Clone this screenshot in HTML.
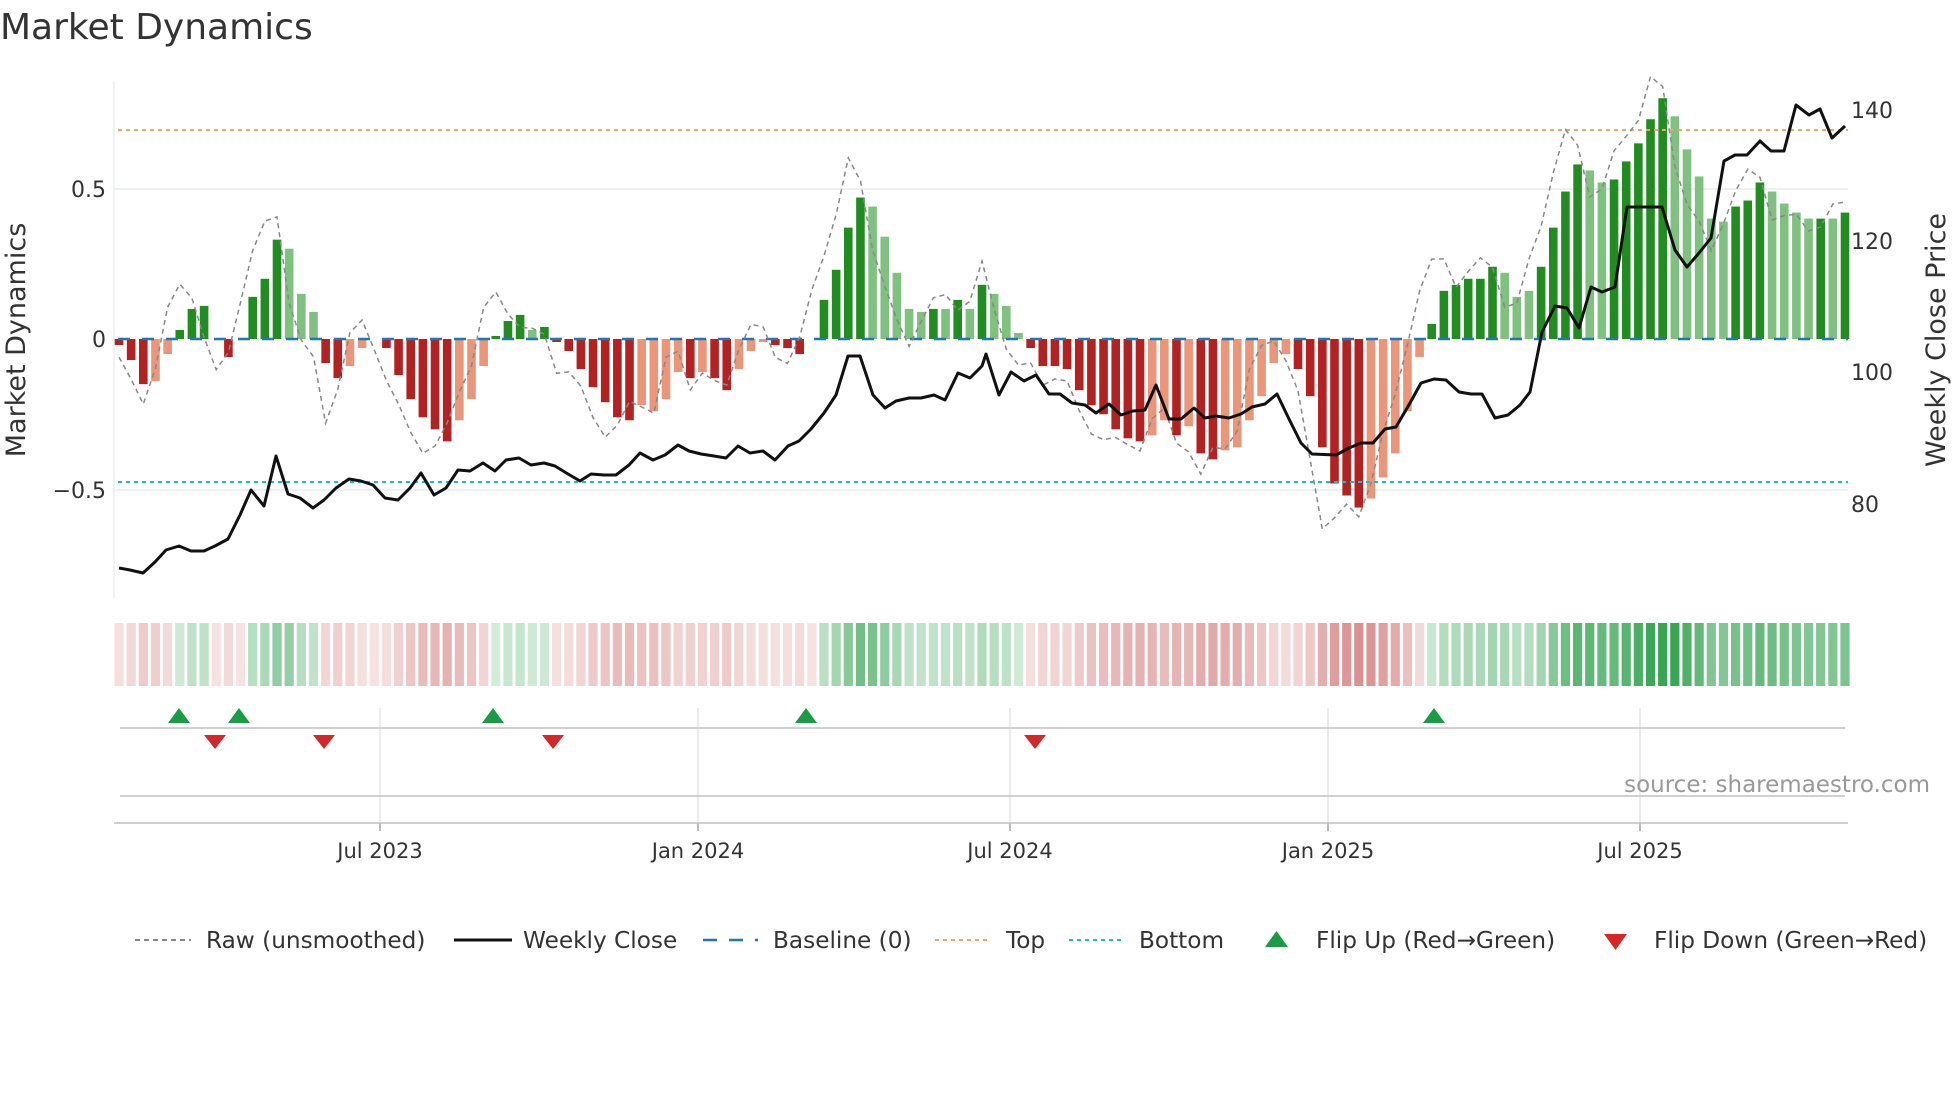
<!DOCTYPE html>
<html><head><meta charset="utf-8">
<style>
html,body{margin:0;padding:0;background:#fff;width:1960px;height:1102px;overflow:hidden}
svg{display:block;font-family:"DejaVu Sans","Liberation Sans",sans-serif}
</style></head>
<body>
<svg id="s" width="1960" height="1102" viewBox="0 0 1960 1102" xmlns="http://www.w3.org/2000/svg">
<text x="0" y="39" font-size="36" fill="#333">Market Dynamics</text>
<line x1="115" y1="189" x2="1848" y2="189" stroke="#e9ecf1" stroke-width="1.5"/>
<line x1="115" y1="490" x2="1848" y2="490" stroke="#e9ecf1" stroke-width="1.5"/>
<line x1="114" y1="81" x2="114" y2="598" stroke="#eceff3" stroke-width="1.5"/>
<g id="bars"></g>
<g id="strip"></g>
<line x1="118" y1="339" x2="1848" y2="339" stroke="#1f77b4" stroke-width="2.5" stroke-dasharray="12,12"/>
<line x1="118" y1="130" x2="1848" y2="130" stroke="#f4a460" stroke-width="2" stroke-dasharray="4,4"/>
<line x1="118" y1="482" x2="1848" y2="482" stroke="#17becf" stroke-width="2" stroke-dasharray="4,4"/>
<polyline id="raw" fill="none" stroke="#888" stroke-width="1.5" stroke-dasharray="5,4"/>
<polyline id="price" fill="none" stroke="#111" stroke-width="3" stroke-linejoin="round"/>
<g font-size="22" fill="#333" text-anchor="end">
<text x="106" y="197">0.5</text><text x="106" y="347">0</text><text x="106" y="498">−0.5</text>
</g>
<g font-size="22" fill="#333">
<text x="1851" y="118">140</text><text x="1851" y="249">120</text><text x="1851" y="380">100</text><text x="1851" y="512">80</text>
</g>
<text transform="translate(25,340) rotate(-90)" font-size="27" fill="#333" text-anchor="middle">Market Dynamics</text>
<text transform="translate(1945,340) rotate(-90)" font-size="27" fill="#333" text-anchor="middle">Weekly Close Price</text>
<g stroke="#e6e6e6" stroke-width="1.5">
<line x1="380" y1="708" x2="380" y2="823"/><line x1="698" y1="708" x2="698" y2="823"/><line x1="1010" y1="708" x2="1010" y2="823"/><line x1="1328" y1="708" x2="1328" y2="823"/><line x1="1640" y1="708" x2="1640" y2="823"/>
</g>
<line x1="120" y1="728" x2="1845" y2="728" stroke="#d0d0d0" stroke-width="2"/>
<line x1="120" y1="796" x2="1845" y2="796" stroke="#d0d0d0" stroke-width="2"/>
<line x1="114" y1="823" x2="1848" y2="823" stroke="#d0d0d0" stroke-width="2"/>
<g stroke="#bbb" stroke-width="2">
<line x1="380" y1="823" x2="380" y2="831"/><line x1="698" y1="823" x2="698" y2="831"/><line x1="1010" y1="823" x2="1010" y2="831"/><line x1="1328" y1="823" x2="1328" y2="831"/><line x1="1640" y1="823" x2="1640" y2="831"/>
</g>
<g font-size="21" fill="#333" text-anchor="middle">
<text x="380" y="858">Jul 2023</text><text x="698" y="858">Jan 2024</text><text x="1010" y="858">Jul 2024</text><text x="1328" y="858">Jan 2025</text><text x="1640" y="858">Jul 2025</text>
</g>
<g id="flips"></g>
<text x="1930" y="792" font-size="23" fill="#999" text-anchor="end">source: sharemaestro.com</text>
<g font-size="23.2" fill="#333">
<line x1="135" y1="940" x2="191" y2="940" stroke="#888" stroke-width="2" stroke-dasharray="5,4"/>
<text x="206" y="948">Raw (unsmoothed)</text>
<line x1="454" y1="940" x2="512" y2="940" stroke="#111" stroke-width="3"/>
<text x="523" y="948">Weekly Close</text>
<line x1="703" y1="940" x2="758" y2="940" stroke="#1f77b4" stroke-width="2.5" stroke-dasharray="14,12"/>
<text x="773" y="948">Baseline (0)</text>
<line x1="935" y1="940" x2="990" y2="940" stroke="#f4a460" stroke-width="2" stroke-dasharray="4,4"/>
<text x="1006" y="948">Top</text>
<line x1="1069" y1="940" x2="1125" y2="940" stroke="#17becf" stroke-width="2" stroke-dasharray="4,4"/>
<text x="1139" y="948">Bottom</text>
<polygon points="1265,947 1288,947 1276.5,931" fill="#1a9b45"/>
<text x="1316" y="948">Flip Up (Red→Green)</text>
<polygon points="1604,934 1627,934 1615.5,950" fill="#d62728"/>
<text x="1654" y="948">Flip Down (Green→Red)</text>
</g>
</svg>
<script>
var V="-0.02d,-0.07d,-0.15d,-0.14l,-0.05l,0.03d,0.1d,0.11d,0d,-0.06d,0d,0.14d,0.2d,0.33d,0.3l,0.15l,0.09l,-0.08d,-0.13d,-0.09l,-0.03l,0d,-0.03d,-0.12d,-0.2d,-0.26d,-0.3d,-0.34d,-0.27l,-0.2l,-0.09l,0.01d,0.06d,0.08d,0.03l,0.04d,-0.01d,-0.04d,-0.1d,-0.16d,-0.21d,-0.26d,-0.27d,-0.22l,-0.24l,-0.2l,-0.11l,-0.13d,-0.11l,-0.13d,-0.17d,-0.1l,-0.04l,-0.01l,-0.02d,-0.03d,-0.05d,0d,0.13d,0.23d,0.37d,0.47d,0.44l,0.34l,0.22l,0.1l,0.09l,0.1d,0.1l,0.13d,0.1l,0.18d,0.15l,0.11l,0.02l,-0.03d,-0.09d,-0.09d,-0.1d,-0.17d,-0.22d,-0.25d,-0.3d,-0.33d,-0.34d,-0.32l,-0.27l,-0.32d,-0.29l,-0.38d,-0.4d,-0.37l,-0.36l,-0.27l,-0.19l,-0.08l,-0.05l,-0.1d,-0.19d,-0.36d,-0.48d,-0.52d,-0.56d,-0.53l,-0.46l,-0.38l,-0.24l,-0.06l,0.05d,0.16d,0.18d,0.2d,0.2d,0.24d,0.22l,0.14l,0.16l,0.24d,0.37d,0.49d,0.58d,0.56l,0.52l,0.53d,0.59d,0.65d,0.73d,0.8d,0.74l,0.63l,0.54l,0.4l,0.39l,0.44d,0.46d,0.52d,0.49l,0.45l,0.42l,0.4l,0.4d,0.4l,0.42d".split(",");
var NS="http://www.w3.org/2000/svg",n=V.length,sp=(1845-119)/(n-1),U=301,Z=339;
function el(t,a,p){var e=document.createElementNS(NS,t);for(var k in a)e.setAttribute(k,a[k]);document.getElementById(p).appendChild(e);return e;}
var vals=[];
for(var i=0;i<n;i++){var s=V[i],v=parseFloat(s),d=s.slice(-1)=="d";vals.push(v);var x=119+i*sp;
 var c=v>=0?(d?"#228b22":"#80c080"):(d?"#b22222":"#e9967a");
 if(v!=0){var h=Math.abs(v)*U;el("rect",{x:x-4.3,y:v>0?Z-h:Z,width:8.6,height:h,fill:c},"bars");}
 var a=Math.min(0.95,0.2+Math.abs(v)*1.0);
 el("rect",{x:x-4.6,y:623,width:9.2,height:63,fill:v>0?"rgb(45,160,75)":"rgb(200,85,85)","fill-opacity":v>0?a:a*0.85},"strip");
}
var rp=[];
for(var i=0;i<n;i++){var p=vals[Math.max(0,i-1)],q=vals[Math.min(n-1,i+1)];var r=vals[i]+0.8*(q-p)+0.04*Math.sin(i*1.7);rp.push((119+i*sp).toFixed(1)+","+(Z-r*U).toFixed(1));}
document.getElementById("raw").setAttribute("points",rp.join(" "));
document.getElementById("price").setAttribute("points","119,568 130,570 143,573 155,562 166,550 179,546 191,551 204,551 215,546 228,539 240,515 251,490 264,506 276,456 288,494 300,498 313,508 324,500 336,488 349,479 361,481 373,485 385,498 398,500 410,488 421,473 434,495 446,488 458,470 470,471 483,463 495,471 506,460 519,458 531,465 544,463 555,466 568,474 580,481 591,474 604,475 616,475 629,465 640,453 653,460 665,455 678,445 689,451 701,454 714,456 726,458 738,446 750,453 763,451 775,460 788,446 799,441 811,429 824,413 836,395 848,356 860,356 873,395 885,408 896,401 909,398 921,398 934,395 945,400 958,373 970,378 982,366 986,354 999,395 1011,372 1024,381 1036,375 1049,394 1060,394 1072,403 1085,405 1096,413 1109,404 1121,415 1133,411 1145,410 1156,385 1169,419 1181,419 1194,408 1205,418 1216,416 1229,418 1241,414 1252,407 1265,404 1277,394 1289,419 1301,443 1312,454 1336,455 1349,448 1361,443 1373,443 1385,429 1396,427 1410,403 1421,383 1434,379 1446,380 1459,392 1471,394 1482,394 1495,418 1508,415 1520,405 1530,392 1542,332 1555,306 1567,308 1579,328 1591,287 1602,292 1615,287 1627,207 1662,207 1675,250 1687,267 1699,253 1711,238 1724,161 1735,155 1747,155 1760,141 1771,151 1784,151 1796,105 1809,115 1820,109 1832,138 1845,126");
[179,239,493,806,1434].forEach(function(x){el("polygon",{points:(x-11)+",723 "+(x+11)+",723 "+x+",708",fill:"#1a9b45"},"flips");});
[215,324,553,1035].forEach(function(x){el("polygon",{points:(x-11)+",735 "+(x+11)+",735 "+x+",749",fill:"#d62728"},"flips");});
</script>
</body></html>
